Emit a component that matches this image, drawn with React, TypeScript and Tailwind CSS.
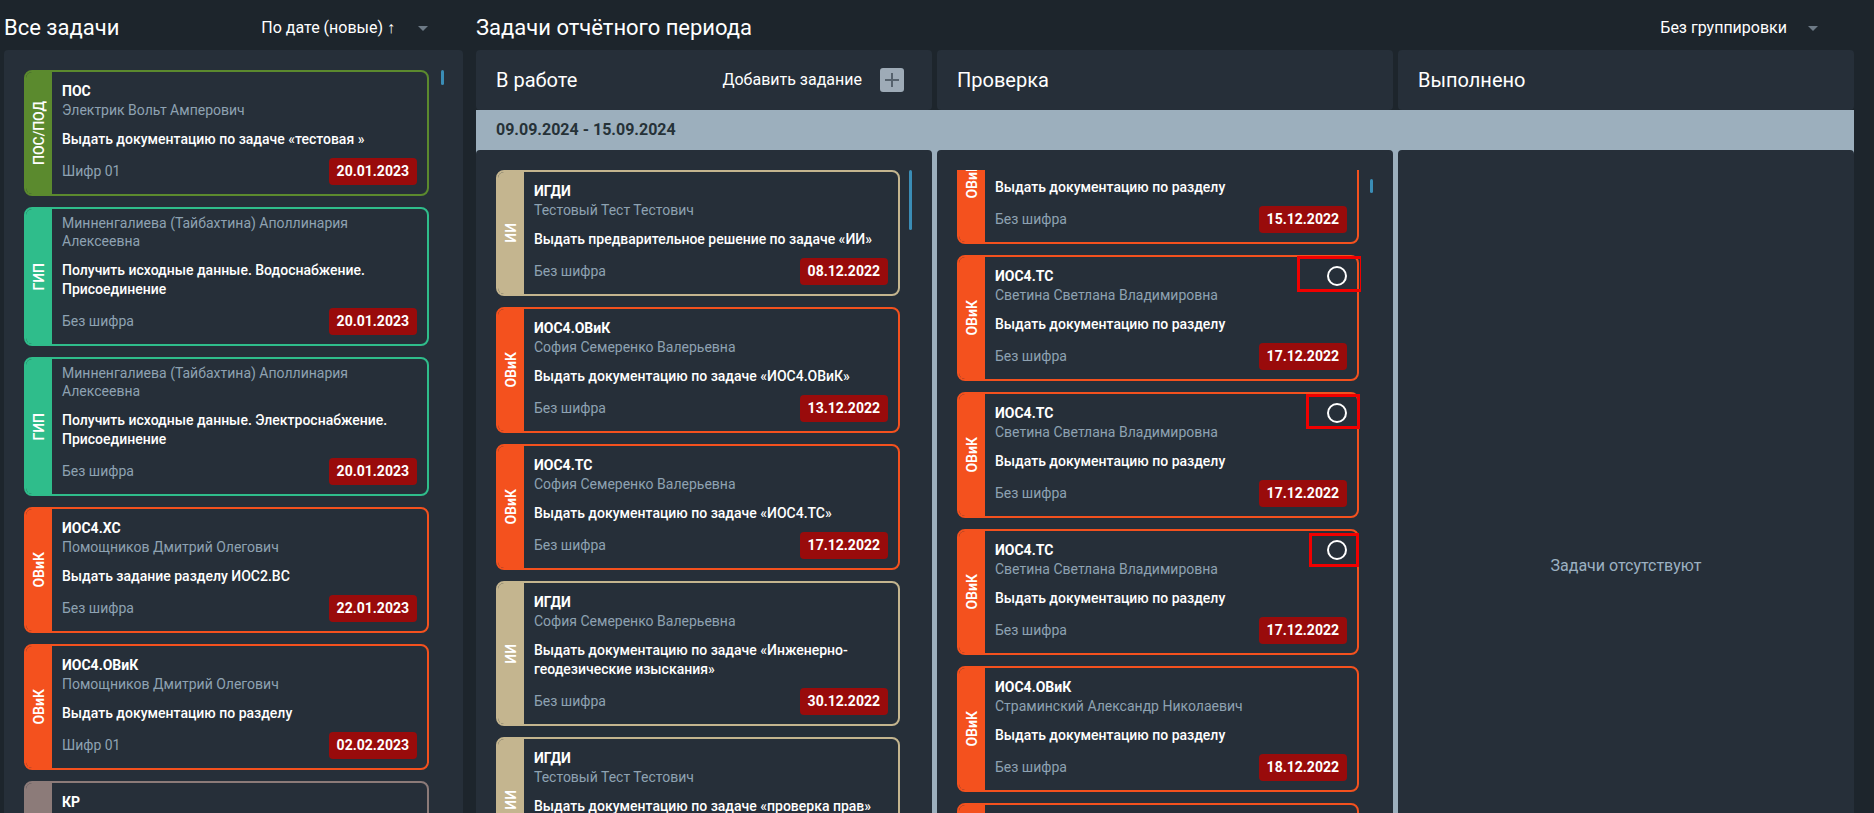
import React from "react";

type Tone = "pos" | "gip" | "ovik" | "kr" | "ii";

type Task = {
  tag: string;
  tone: Tone;
  code?: string;
  person: string;
  text: string;
  cipher: string;
  date: string;
  circle?: boolean;
  mark?: string;
};

const tones: Record<Tone, { border: string; strip: string; weight: string }> = {
  pos: { border: "border-[#5b8a2e]", strip: "bg-[#5b8a2e]", weight: "font-medium" },
  gip: { border: "border-[#2fbd8b]", strip: "bg-[#2fbd8b]", weight: "font-semibold" },
  ovik: { border: "border-[#f4511e]", strip: "bg-[#f4511e]", weight: "font-semibold" },
  kr: { border: "border-[#8c7b79]", strip: "bg-[#8c7b79]", weight: "font-semibold" },
  ii: { border: "border-[#c4b58f]", strip: "bg-[#c4b58f]", weight: "font-semibold" },
};

const allTasks: Task[] = [
  { tag: "ПОС/ПОД", tone: "pos", code: "ПОС", person: "Электрик Вольт Амперович", text: "Выдать документацию по задаче «тестовая »", cipher: "Шифр 01", date: "20.01.2023" },
  { tag: "ГИП", tone: "gip", person: "Минненгалиева (Тайбахтина) Аполлинария Алексеевна", text: "Получить исходные данные. Водоснабжение. Присоединение", cipher: "Без шифра", date: "20.01.2023" },
  { tag: "ГИП", tone: "gip", person: "Минненгалиева (Тайбахтина) Аполлинария Алексеевна", text: "Получить исходные данные. Электроснабжение. Присоединение", cipher: "Без шифра", date: "20.01.2023" },
  { tag: "ОВиК", tone: "ovik", code: "ИОС4.ХС", person: "Помощников Дмитрий Олегович", text: "Выдать задание разделу ИОС2.ВС", cipher: "Без шифра", date: "22.01.2023" },
  { tag: "ОВиК", tone: "ovik", code: "ИОС4.ОВиК", person: "Помощников Дмитрий Олегович", text: "Выдать документацию по разделу", cipher: "Шифр 01", date: "02.02.2023" },
  { tag: "КР", tone: "kr", code: "КР", person: "Помощников Дмитрий Олегович", text: "Выдать документацию по разделу", cipher: "Без шифра", date: "05.02.2023" },
];

const inWork: Task[] = [
  { tag: "ИИ", tone: "ii", code: "ИГДИ", person: "Тестовый Тест Тестович", text: "Выдать предварительное решение по задаче «ИИ»", cipher: "Без шифра", date: "08.12.2022" },
  { tag: "ОВиК", tone: "ovik", code: "ИОС4.ОВиК", person: "София Семеренко Валерьевна", text: "Выдать документацию по задаче «ИОС4.ОВиК»", cipher: "Без шифра", date: "13.12.2022" },
  { tag: "ОВиК", tone: "ovik", code: "ИОС4.ТС", person: "София Семеренко Валерьевна", text: "Выдать документацию по задаче «ИОС4.ТС»", cipher: "Без шифра", date: "17.12.2022" },
  { tag: "ИИ", tone: "ii", code: "ИГДИ", person: "София Семеренко Валерьевна", text: "Выдать документацию по задаче «Инженерно-геодезические изыскания»", cipher: "Без шифра", date: "30.12.2022" },
  { tag: "ИИ", tone: "ii", code: "ИГДИ", person: "Тестовый Тест Тестович", text: "Выдать документацию по задаче «проверка прав»", cipher: "Без шифра", date: "31.12.2022" },
];

const review: Task[] = [
  { tag: "ОВиК", tone: "ovik", code: "ИОС4.ОВиК", person: "Светина Светлана Владимировна", text: "Выдать документацию по разделу", cipher: "Без шифра", date: "15.12.2022" },
  { tag: "ОВиК", tone: "ovik", code: "ИОС4.ТС", person: "Светина Светлана Владимировна", text: "Выдать документацию по разделу", cipher: "Без шифра", date: "17.12.2022", circle: true, mark: "left-[338px] top-[-1px] h-[36px] w-[66px]" },
  { tag: "ОВиК", tone: "ovik", code: "ИОС4.ТС", person: "Светина Светлана Владимировна", text: "Выдать документацию по разделу", cipher: "Без шифра", date: "17.12.2022", circle: true, mark: "left-[347px] top-0 h-[35px] w-[54px]" },
  { tag: "ОВиК", tone: "ovik", code: "ИОС4.ТС", person: "Светина Светлана Владимировна", text: "Выдать документацию по разделу", cipher: "Без шифра", date: "17.12.2022", circle: true, mark: "left-[350px] top-[2px] h-[34px] w-[50px]" },
  { tag: "ОВиК", tone: "ovik", code: "ИОС4.ОВиК", person: "Страминский Александр Николаевич", text: "Выдать документацию по разделу", cipher: "Без шифра", date: "18.12.2022" },
  { tag: "ОВиК", tone: "ovik", code: "ИОС4.ОВиК", person: "Страминский Александр Николаевич", text: "Выдать документацию по разделу", cipher: "Без шифра", date: "20.12.2022" },
];

function Caret() {
  return (
    <svg width="10" height="5" viewBox="0 0 10 5" className="shrink-0">
      <path d="M0 0h10L5 5z" fill="#6d7a86" />
    </svg>
  );
}

function TaskCard({ t }: { t: Task }) {
  const tone = tones[t.tone];
  return (
    <div className={`relative flex shrink-0 rounded-[8px] border-2 bg-[#262f39] ${tone.border}`}>
      <div className={`flex w-[26px] shrink-0 items-center justify-center rounded-l-[6px] ${tone.strip}`}>
        <span className={`rotate-180 whitespace-nowrap text-[14px] text-white [writing-mode:vertical-rl] ${tone.weight}`}>
          {t.tag}
        </span>
      </div>
      <div className={`flex min-w-0 flex-1 flex-col px-[10px] pb-[9px] ${t.code ? "pt-[9px]" : "pt-[5px]"}`}>
        {t.code && <div className="text-[14px] font-bold leading-[20px] text-white">{t.code}</div>}
        <div className="text-[14px] leading-[18px] text-[#8ea2b2]">{t.person}</div>
        <div className="mt-[11px] text-[14px] font-medium leading-[19px] text-white">{t.text}</div>
        <div className="mt-[9px] flex items-center justify-between">
          <span className="text-[14px] text-[#8ea2b2]">{t.cipher}</span>
          <span className="rounded-[4px] bg-[#990b0b] px-2 text-[14px] font-bold leading-[27px] text-white">
            {t.date}
          </span>
        </div>
      </div>
      {t.circle && (
        <span className="absolute right-[10px] top-[9px] h-5 w-5 rounded-full border-2 border-white" />
      )}
      {t.mark && <span className={`absolute border-[3px] border-[#f00000] ${t.mark}`} />}
    </div>
  );
}

function Thumb({ className }: { className: string }) {
  return <span className={`absolute w-[3px] rounded-full bg-[#3a8db6] ${className}`} />;
}

export default function App() {
  return (
    <div className="flex h-[813px] w-full overflow-hidden bg-[#1d252c] font-[Roboto,sans-serif] text-white">
      {/* all tasks */}
      <div className="ml-1 flex w-[459px] shrink-0 flex-col">
        <div className="flex h-[50px] shrink-0 items-center justify-between pr-[35px] pt-[6px]">
          <h1 className="text-[22px] leading-none">Все задачи</h1>
          <div className="flex items-center gap-[23px] text-[16px] leading-none">
            <span>По дате (новые) ↑</span>
            <Caret />
          </div>
        </div>
        <div className="relative flex-1 rounded-t-[4px] bg-[#262f39] pl-5 pr-[34px] pt-5">
          <div className="flex flex-col gap-[11px]">
            {allTasks.map((t, i) => (
              <TaskCard key={i} t={t} />
            ))}
          </div>
          <Thumb className="left-[437px] top-5 h-[15px]" />
        </div>
      </div>

      {/* period board */}
      <div className="ml-[13px] flex w-[1378px] shrink-0 flex-col">
        <div className="flex h-[50px] shrink-0 items-center justify-between pr-[36px] pt-[6px]">
          <h2 className="text-[22px] leading-none">Задачи отчётного периода</h2>
          <div className="flex items-center gap-[21px] text-[16px] leading-none">
            <span>Без группировки</span>
            <Caret />
          </div>
        </div>

        <div className="grid h-[60px] shrink-0 grid-cols-3 gap-[5px]">
          <div className="flex items-center justify-between rounded-[4px] bg-[#262f39] pl-5 pr-[28px]">
            <span className="text-[20px]">В работе</span>
            <div className="flex items-center gap-[18px]">
              <span className="text-[16px]">Добавить задание</span>
              <button className="flex h-6 w-6 items-center justify-center rounded-[3px] bg-[#9eabb7]">
                <svg width="14" height="14" viewBox="0 0 14 14">
                  <path d="M7 0v14M0 7h14" stroke="#56626d" strokeWidth="2" />
                </svg>
              </button>
            </div>
          </div>
          <div className="flex items-center rounded-[4px] bg-[#262f39] pl-5">
            <span className="text-[20px]">Проверка</span>
          </div>
          <div className="flex items-center rounded-[4px] bg-[#262f39] pl-5">
            <span className="text-[20px]">Выполнено</span>
          </div>
        </div>

        <div className="flex flex-col bg-[#9cafbd]">
          <div className="flex h-10 items-center pl-5 text-[16px] font-bold text-[#263238]">
            09.09.2024 - 15.09.2024
          </div>
          <div className="grid grid-cols-3 gap-[5px]">
            <div className="relative h-[832px] rounded-t-[4px] bg-[#262f39] pl-5 pr-8 pt-5">
              <div className="flex flex-col gap-[11px]">
                {inWork.map((t, i) => (
                  <TaskCard key={i} t={t} />
                ))}
              </div>
              <Thumb className="left-[433px] top-5 h-[60px]" />
            </div>
            <div className="relative h-[832px] rounded-t-[4px] bg-[#262f39] pl-5 pr-8 pt-5">
              <div className="h-full overflow-hidden">
                <div className="-mt-[52px] flex flex-col gap-[11px] pr-[2px]">
                  {review.map((t, i) => (
                    <TaskCard key={i} t={t} />
                  ))}
                </div>
              </div>
              <Thumb className="left-[433px] top-[29px] h-[14px]" />
            </div>
            <div className="flex h-[832px] items-center justify-center rounded-t-[4px] bg-[#262f39]">
              <span className="text-[16px] text-[#9cb1c2]">Задачи отсутствуют</span>
            </div>
          </div>
        </div>
      </div>
    </div>
  );
}
